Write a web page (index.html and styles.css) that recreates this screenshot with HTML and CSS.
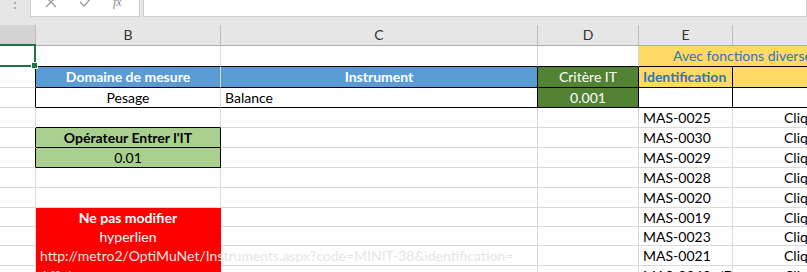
FILE: index.html
```html
<!DOCTYPE html>
<html lang="fr">
<head>
<meta charset="UTF-8">
<title>Instruments</title>
<link rel="stylesheet" href="styles.css">
</head>
<body>
  <div class="topbar">
    <span class="dots">&#8942;</span>
    <div class="fx-tools">
      <svg class="ico" width="12" height="12" viewBox="0 0 12 12"><path d="M1 1 L11 11 M11 1 L1 11" stroke="#9a9a9a" stroke-width="1.3" fill="none"/></svg>
      <svg class="ico" width="14" height="12" viewBox="0 0 14 12"><path d="M1 6 L5 10 L13 1" stroke="#9a9a9a" stroke-width="1.3" fill="none"/></svg>
      <span class="fx">fx</span>
    </div>
    <div class="fx-input"></div>
  </div>

  <div class="sheet">
    <!-- en-tetes de colonnes -->
    <div class="hd hd-sel"></div>
    <div class="hd">B</div>
    <div class="hd">C</div>
    <div class="hd">D</div>
    <div class="hd">E</div>
    <div class="hd">F</div>

    <!-- ligne 1 -->
    <div class="c"></div>
    <div class="c bb"></div>
    <div class="c bb"></div>
    <div class="c bb"></div>
    <div class="c bb yellow span2 teal left-pad">Avec fonctions diverses</div>

    <!-- ligne 2 -->
    <div class="c br"></div>
    <div class="c blue bold center bb">Domaine de mesure</div>
    <div class="c blue bold center bb br">Instrument</div>
    <div class="c dgreen center bb br">Critère IT</div>
    <div class="c yellow bold teal bb br">Identification</div>
    <div class="c yellow bb"></div>

    <!-- ligne 3 -->
    <div class="c br"></div>
    <div class="c center bb">Pesage</div>
    <div class="c bb br">Balance</div>
    <div class="c dgreen center bb br">0.001</div>
    <div class="c bb br"></div>
    <div class="c bb"></div>

    <!-- ligne 4 -->
    <div class="c"></div>
    <div class="c bb"></div>
    <div class="c"></div>
    <div class="c"></div>
    <div class="c">MAS-0025</div>
    <div class="c link">Cliquer ici</div>

    <!-- ligne 5 -->
    <div class="c br"></div>
    <div class="c lgreen bold center bb br">Opérateur Entrer l'IT</div>
    <div class="c"></div>
    <div class="c"></div>
    <div class="c">MAS-0030</div>
    <div class="c link">Cliquer ici</div>

    <!-- ligne 6 -->
    <div class="c br"></div>
    <div class="c lgreen center bb br">0.01</div>
    <div class="c"></div>
    <div class="c"></div>
    <div class="c">MAS-0029</div>
    <div class="c link">Cliquer ici</div>

    <!-- ligne 7 -->
    <div class="c"></div>
    <div class="c"></div>
    <div class="c"></div>
    <div class="c"></div>
    <div class="c">MAS-0028</div>
    <div class="c link">Cliquer ici</div>

    <!-- ligne 8 -->
    <div class="c"></div>
    <div class="c"></div>
    <div class="c"></div>
    <div class="c"></div>
    <div class="c">MAS-0020</div>
    <div class="c link">Cliquer ici</div>

    <!-- ligne 9 -->
    <div class="c"></div>
    <div class="c red bold center">Ne pas modifier</div>
    <div class="c"></div>
    <div class="c"></div>
    <div class="c">MAS-0019</div>
    <div class="c link">Cliquer ici</div>

    <!-- ligne 10 -->
    <div class="c"></div>
    <div class="c red center">hyperlien</div>
    <div class="c"></div>
    <div class="c"></div>
    <div class="c">MAS-0023</div>
    <div class="c link">Cliquer ici</div>

    <!-- ligne 11 -->
    <div class="c"></div>
    <div class="c red">http://metro2/OptiMuNet/Instruments.aspx?code=MINIT-38&amp;identification=</div>
    <div class="c"></div>
    <div class="c"></div>
    <div class="c">MAS-0021</div>
    <div class="c link">Cliquer ici</div>

    <!-- ligne 12 -->
    <div class="c"></div>
    <div class="c red">Afficher</div>
    <div class="c"></div>
    <div class="c"></div>
    <div class="c">MAS-0040_/D</div>
    <div class="c link">Cliquer ici</div>

    <div class="selection"><span class="handle"></span></div>
  </div>
</body>
</html>
```

FILE: styles.css
```css
body {
  margin: 0;
  background-color: #e6e6e6;
  font-family: Lato, "Open Sans", sans-serif;
  overflow: hidden;
}
.topbar {
  display: flex;
  align-items: flex-start;
  height: 25px;
}
.dots {
  width: 30px;
  text-align: center;
  color: #9a9a9a;
  font-size: 14px;
  line-height: 10px;
  margin-top: -2px;
}
.fx-tools {
  display: flex;
  align-items: center;
  width: 108px;
  height: 28px;
  margin-top: -13px;
  background-color: #fff;
  border: 1px solid #cfcfcf;
}
.ico {
  margin-left: 14px;
}
.ico + .ico {
  margin-left: 22px;
}
.fx {
  margin-left: 20px;
  font-family: "Liberation Serif", serif;
  font-style: italic;
  font-size: 12px;
  color: #8a8a8a;
}
.fx-input {
  flex: 1;
  height: 28px;
  margin-top: -13px;
  margin-left: 3px;
  background-color: #fff;
  border: 1px solid #cfcfcf;
}
.sheet {
  position: relative;
  display: grid;
  grid-template-columns: 36px 185px 317px 101px 94px 200px;
  grid-template-rows: 21px 21px 21px 20px 20px 20px 20px 20px 20px 19px 19px 20px 20px;
  background-color: #fff;
  font-size: 14px;
  color: #000;
}
.hd {
  box-sizing: border-box;
  background-color: #e6e6e6;
  border-right: 1px solid #bcbcbc;
  border-bottom: 1px solid #ababab;
  text-align: center;
  font-size: 14px;
  line-height: 20px;
  color: #333;
}
.hd-sel {
  background-color: #d3d3d3;
}
.c {
  box-sizing: border-box;
  border-right: 1px solid #d9d9d9;
  border-bottom: 1px solid #d9d9d9;
  padding: 0 4px;
  line-height: 19px;
  white-space: nowrap;
}
.bb { border-bottom-color: #000; }
.br { border-right-color: #000; }
.center { text-align: center; }
.bold { font-weight: bold; }
.span2 { grid-column: span 2; }
.left-pad { padding-left: 34px; }
.teal { color: #2f75b5; }
.blue {
  background-color: #5b9bd5;
  color: #fff;
}
.dgreen {
  background-color: #548235;
  color: #fff;
}
.lgreen {
  background-color: #a9d08e;
}
.yellow {
  background-color: #ffd966;
}
.red {
  background-color: #ff0000;
  border-color: #ff0000;
  color: #e6e6e6;
  overflow: visible;
}
.red.bold,
.red.center {
  color: #fff;
}
.link {
  padding-left: 51px;
}
.selection {
  position: absolute;
  left: -3px;
  top: 19px;
  width: 35px;
  height: 19px;
  border: 2px solid #217346;
}
.handle {
  position: absolute;
  right: -4px;
  bottom: -4px;
  width: 5px;
  height: 5px;
  background-color: #217346;
  border: 1px solid #fff;
}
```
